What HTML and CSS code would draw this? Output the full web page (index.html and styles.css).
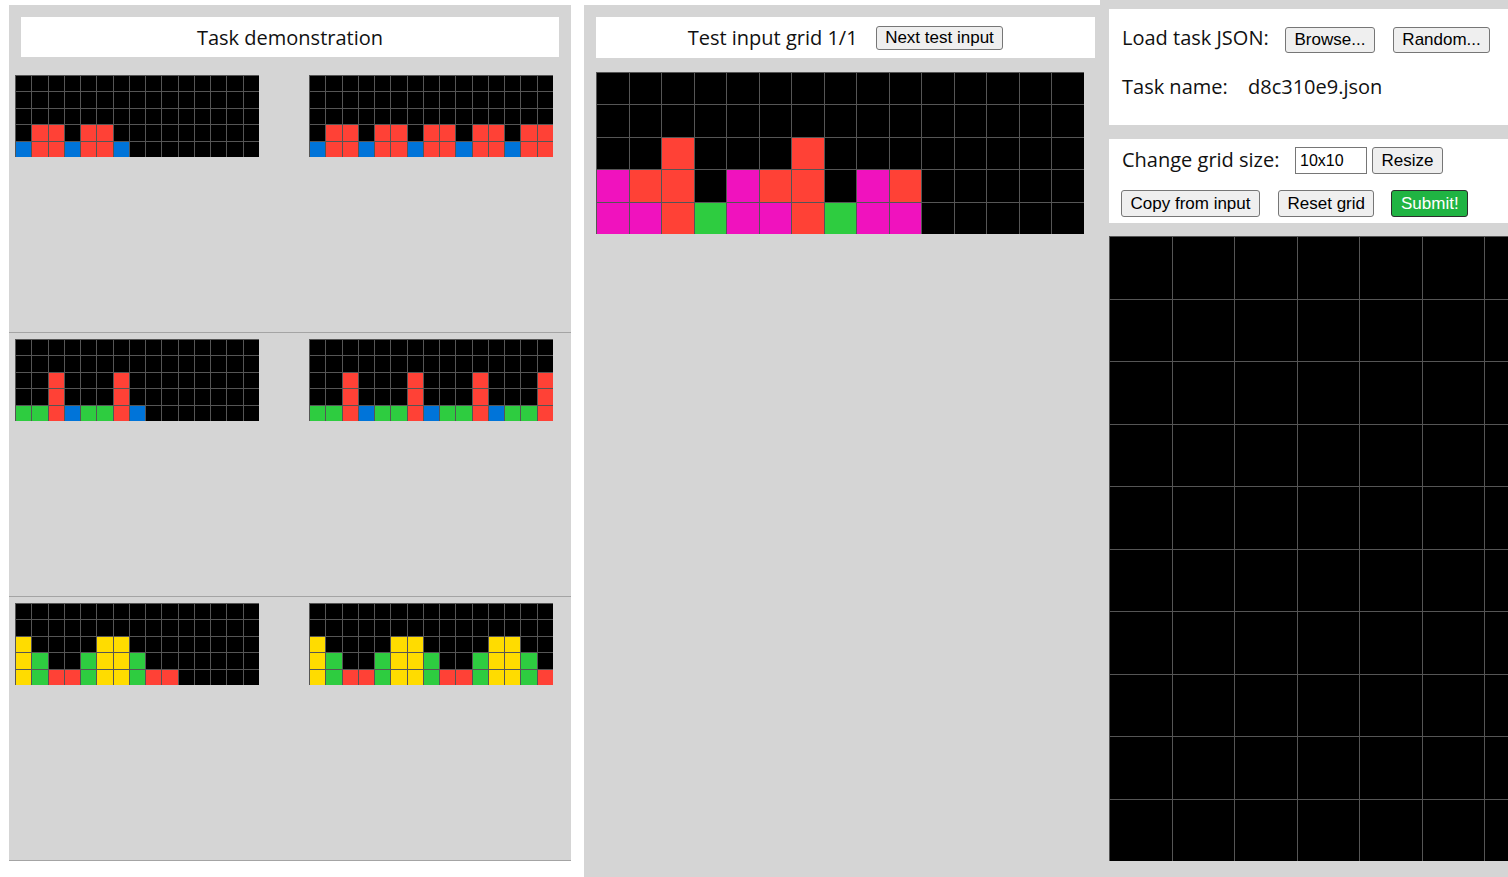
FILE: index.html
```html
<!DOCTYPE html>
<html>
<head>
<meta charset="utf-8">
<title>ARC testing interface</title>
<link rel="stylesheet" href="styles.css">
</head>
<body>
<div class="workspace">
  <div class="demo">
    <div class="demo-header">Task demonstration</div>

    <div class="pair">
      <div class="grid mini">
        <span></span><span></span><span></span><span></span><span></span><span></span><span></span><span></span><span></span><span></span><span></span><span></span><span></span><span></span><span></span>
        <span></span><span></span><span></span><span></span><span></span><span></span><span></span><span></span><span></span><span></span><span></span><span></span><span></span><span></span><span></span>
        <span></span><span></span><span></span><span></span><span></span><span></span><span></span><span></span><span></span><span></span><span></span><span></span><span></span><span></span><span></span>
        <span></span><span class="r"></span><span class="r"></span><span></span><span class="r"></span><span class="r"></span><span></span><span></span><span></span><span></span><span></span><span></span><span></span><span></span><span></span>
        <span class="b"></span><span class="r"></span><span class="r"></span><span class="b"></span><span class="r"></span><span class="r"></span><span class="b"></span><span></span><span></span><span></span><span></span><span></span><span></span><span></span><span></span>
      </div>
      <div class="grid mini">
        <span></span><span></span><span></span><span></span><span></span><span></span><span></span><span></span><span></span><span></span><span></span><span></span><span></span><span></span><span></span>
        <span></span><span></span><span></span><span></span><span></span><span></span><span></span><span></span><span></span><span></span><span></span><span></span><span></span><span></span><span></span>
        <span></span><span></span><span></span><span></span><span></span><span></span><span></span><span></span><span></span><span></span><span></span><span></span><span></span><span></span><span></span>
        <span></span><span class="r"></span><span class="r"></span><span></span><span class="r"></span><span class="r"></span><span></span><span class="r"></span><span class="r"></span><span></span><span class="r"></span><span class="r"></span><span></span><span class="r"></span><span class="r"></span>
        <span class="b"></span><span class="r"></span><span class="r"></span><span class="b"></span><span class="r"></span><span class="r"></span><span class="b"></span><span class="r"></span><span class="r"></span><span class="b"></span><span class="r"></span><span class="r"></span><span class="b"></span><span class="r"></span><span class="r"></span>
      </div>
    </div>

    <div class="pair">
      <div class="grid mini">
        <span></span><span></span><span></span><span></span><span></span><span></span><span></span><span></span><span></span><span></span><span></span><span></span><span></span><span></span><span></span>
        <span></span><span></span><span></span><span></span><span></span><span></span><span></span><span></span><span></span><span></span><span></span><span></span><span></span><span></span><span></span>
        <span></span><span></span><span class="r"></span><span></span><span></span><span></span><span class="r"></span><span></span><span></span><span></span><span></span><span></span><span></span><span></span><span></span>
        <span></span><span></span><span class="r"></span><span></span><span></span><span></span><span class="r"></span><span></span><span></span><span></span><span></span><span></span><span></span><span></span><span></span>
        <span class="g"></span><span class="g"></span><span class="r"></span><span class="b"></span><span class="g"></span><span class="g"></span><span class="r"></span><span class="b"></span><span></span><span></span><span></span><span></span><span></span><span></span><span></span>
      </div>
      <div class="grid mini">
        <span></span><span></span><span></span><span></span><span></span><span></span><span></span><span></span><span></span><span></span><span></span><span></span><span></span><span></span><span></span>
        <span></span><span></span><span></span><span></span><span></span><span></span><span></span><span></span><span></span><span></span><span></span><span></span><span></span><span></span><span></span>
        <span></span><span></span><span class="r"></span><span></span><span></span><span></span><span class="r"></span><span></span><span></span><span></span><span class="r"></span><span></span><span></span><span></span><span class="r"></span>
        <span></span><span></span><span class="r"></span><span></span><span></span><span></span><span class="r"></span><span></span><span></span><span></span><span class="r"></span><span></span><span></span><span></span><span class="r"></span>
        <span class="g"></span><span class="g"></span><span class="r"></span><span class="b"></span><span class="g"></span><span class="g"></span><span class="r"></span><span class="b"></span><span class="g"></span><span class="g"></span><span class="r"></span><span class="b"></span><span class="g"></span><span class="g"></span><span class="r"></span>
      </div>
    </div>

    <div class="pair">
      <div class="grid mini">
        <span></span><span></span><span></span><span></span><span></span><span></span><span></span><span></span><span></span><span></span><span></span><span></span><span></span><span></span><span></span>
        <span></span><span></span><span></span><span></span><span></span><span></span><span></span><span></span><span></span><span></span><span></span><span></span><span></span><span></span><span></span>
        <span class="y"></span><span></span><span></span><span></span><span></span><span class="y"></span><span class="y"></span><span></span><span></span><span></span><span></span><span></span><span></span><span></span><span></span>
        <span class="y"></span><span class="g"></span><span></span><span></span><span class="g"></span><span class="y"></span><span class="y"></span><span class="g"></span><span></span><span></span><span></span><span></span><span></span><span></span><span></span>
        <span class="y"></span><span class="g"></span><span class="r"></span><span class="r"></span><span class="g"></span><span class="y"></span><span class="y"></span><span class="g"></span><span class="r"></span><span class="r"></span><span></span><span></span><span></span><span></span><span></span>
      </div>
      <div class="grid mini">
        <span></span><span></span><span></span><span></span><span></span><span></span><span></span><span></span><span></span><span></span><span></span><span></span><span></span><span></span><span></span>
        <span></span><span></span><span></span><span></span><span></span><span></span><span></span><span></span><span></span><span></span><span></span><span></span><span></span><span></span><span></span>
        <span class="y"></span><span></span><span></span><span></span><span></span><span class="y"></span><span class="y"></span><span></span><span></span><span></span><span></span><span class="y"></span><span class="y"></span><span></span><span></span>
        <span class="y"></span><span class="g"></span><span></span><span></span><span class="g"></span><span class="y"></span><span class="y"></span><span class="g"></span><span></span><span></span><span class="g"></span><span class="y"></span><span class="y"></span><span class="g"></span><span></span>
        <span class="y"></span><span class="g"></span><span class="r"></span><span class="r"></span><span class="g"></span><span class="y"></span><span class="y"></span><span class="g"></span><span class="r"></span><span class="r"></span><span class="g"></span><span class="y"></span><span class="y"></span><span class="g"></span><span class="r"></span>
      </div>
    </div>
  </div>

  <div class="eval">
    <div class="eval-header">
      <span class="title">Test input grid 1/1</span>
      <button class="btn btn-next">Next test input</button>
    </div>
    <div class="grid test-grid">
      <span></span><span></span><span></span><span></span><span></span><span></span><span></span><span></span><span></span><span></span><span></span><span></span><span></span><span></span><span></span>
      <span></span><span></span><span></span><span></span><span></span><span></span><span></span><span></span><span></span><span></span><span></span><span></span><span></span><span></span><span></span>
      <span></span><span></span><span class="r"></span><span></span><span></span><span></span><span class="r"></span><span></span><span></span><span></span><span></span><span></span><span></span><span></span><span></span>
      <span class="m"></span><span class="r"></span><span class="r"></span><span></span><span class="m"></span><span class="r"></span><span class="r"></span><span></span><span class="m"></span><span class="r"></span><span></span><span></span><span></span><span></span><span></span>
      <span class="m"></span><span class="m"></span><span class="r"></span><span class="g"></span><span class="m"></span><span class="m"></span><span class="r"></span><span class="g"></span><span class="m"></span><span class="m"></span><span></span><span></span><span></span><span></span><span></span>
    </div>
  </div>

  <div class="editor">
    <div class="box load-box">
      <div class="row row-load">
        <span class="lbl lbl-load">Load task JSON:</span>
        <button class="btn btn-tall btn-browse">Browse...</button>
        <button class="btn btn-tall">Random...</button>
      </div>
      <div class="row row-name">
        <span class="lbl lbl-name">Task name:</span>
        <span class="lbl">d8c310e9.json</span>
      </div>
    </div>
    <div class="box size-box">
      <div class="row row-size">
        <span class="lbl lbl-size">Change grid size:</span>
        <input class="size-input" type="text" value="10x10">
        <button class="btn btn-tall">Resize</button>
      </div>
      <div class="row row-actions">
        <button class="btn btn-tall btn-copy">Copy from input</button>
        <button class="btn btn-tall btn-reset">Reset grid</button>
        <button class="btn btn-tall btn-submit">Submit!</button>
      </div>
    </div>
    <div class="grid out-grid">
      <span></span><span></span><span></span><span></span><span></span><span></span><span></span><span></span><span></span><span></span>
      <span></span><span></span><span></span><span></span><span></span><span></span><span></span><span></span><span></span><span></span>
      <span></span><span></span><span></span><span></span><span></span><span></span><span></span><span></span><span></span><span></span>
      <span></span><span></span><span></span><span></span><span></span><span></span><span></span><span></span><span></span><span></span>
      <span></span><span></span><span></span><span></span><span></span><span></span><span></span><span></span><span></span><span></span>
      <span></span><span></span><span></span><span></span><span></span><span></span><span></span><span></span><span></span><span></span>
      <span></span><span></span><span></span><span></span><span></span><span></span><span></span><span></span><span></span><span></span>
      <span></span><span></span><span></span><span></span><span></span><span></span><span></span><span></span><span></span><span></span>
      <span></span><span></span><span></span><span></span><span></span><span></span><span></span><span></span><span></span><span></span>
      <span></span><span></span><span></span><span></span><span></span><span></span><span></span><span></span><span></span><span></span>
    </div>
  </div>
</div>
</body>
</html>
```

FILE: styles.css
```css
html, body {
  margin: 0;
  padding: 0;
  background: #ffffff;
  overflow: hidden;
}

body {
  width: 1508px;
  height: 877px;
  font-family: "Open Sans", "Liberation Sans", sans-serif;
  color: #111111;
}

.workspace {
  display: flex;
  align-items: flex-start;
}

/* ---------- demonstration panel ---------- */
.demo {
  flex-shrink: 0;
  width: 562px;
  margin: 5px 0 0 9px;
  background: #d5d5d5;
}

.demo-header {
  height: 40px;
  margin: 12px 12px 12px;
  background: #ffffff;
  font-size: 20px;
  display: flex;
  align-items: center;
  justify-content: center;
}

.pair {
  box-sizing: border-box;
  height: 264px;
  padding: 6px 0 0 6px;
  border-bottom: 1px solid #a4a4a4;
  display: flex;
  align-items: flex-start;
  gap: 50px;
}

/* ---------- grids ---------- */
.grid {
  display: grid;
  background: #000000;
}

.grid > span {
  display: block;
  box-sizing: border-box;
  background: #000000;
  border-left: 1px solid #555555;
  border-top: 1px solid #555555;
}

.grid > span.r { background: #ff4136; }
.grid > span.b { background: #0074d9; }
.grid > span.g { background: #2ecc40; }
.grid > span.y { background: #ffdc00; }
.grid > span.m { background: #f012be; }

.mini {
  width: 244px;
  height: 82px;
  grid-template-columns: repeat(15, 1fr);
  grid-template-rows: repeat(5, 1fr);
}

.test-grid {
  width: 488px;
  height: 162px;
  margin-top: 14px;
  grid-template-columns: repeat(15, 1fr);
  grid-template-rows: repeat(5, 1fr);
}

.out-grid {
  width: 625px;
  height: 625px;
  margin-top: 13px;
  grid-template-columns: repeat(10, 1fr);
  grid-template-rows: repeat(10, 1fr);
}

/* ---------- evaluation panel ---------- */
.eval {
  flex-shrink: 0;
  box-sizing: border-box;
  width: 516px;
  height: 872px;
  margin: 5px 0 0 13px;
  padding: 12px 0 0 12px;
  background: #d5d5d5;
}

.eval-header {
  width: 499px;
  height: 41px;
  background: #ffffff;
  display: flex;
  align-items: center;
  justify-content: center;
  gap: 18px;
  font-size: 20px;
}

/* ---------- buttons ---------- */
.btn {
  box-sizing: border-box;
  font-family: "Liberation Sans", Arial, sans-serif;
  font-size: 17px;
  line-height: 20px;
  color: #000000;
  background: #efefef;
  border: 1px solid #767676;
  border-radius: 3px;
  padding: 1px 8.5px;
  margin: 0;
  height: 24px;
}

.btn-tall {
  height: 26px;
  padding: 2px 8.5px;
}

.row-size .btn-tall,
.row-actions .btn-tall {
  height: 27px;
}

.btn-submit {
  background: #20b443;
  color: #ffffff;
  border-color: #2d2d2d;
}

/* ---------- editor column ---------- */
.editor {
  flex-shrink: 0;
  box-sizing: border-box;
  width: 700px;
  height: 877px;
  padding: 9px 0 0 9px;
  background: #d5d5d5;
}

.box {
  box-sizing: border-box;
  width: 625px;
  background: #ffffff;
  padding-left: 13px;
}

.load-box {
  height: 116px;
  padding-top: 18px;
}

.size-box {
  height: 84px;
  margin-top: 14px;
  padding-top: 8px;
}

.row {
  display: flex;
  align-items: center;
}

.lbl {
  font-size: 20px;
  line-height: 28px;
  white-space: nowrap;
}

.row-load {
  height: 26px;
}

.lbl-load {
  width: 163px;
  margin-top: -5px;
}

.btn-browse {
  margin-right: 18px;
}

.row-name {
  margin-top: 20px;
  height: 28px;
}

.lbl-name {
  width: 126px;
}

.row-size {
  height: 27px;
}

.lbl-size {
  width: 173px;
  margin-top: -2px;
}

.size-input {
  box-sizing: border-box;
  width: 72px;
  height: 27px;
  margin: 0 5px 0 0;
  padding: 0 4px;
  border: 1px solid #767676;
  font-family: "Liberation Sans", Arial, sans-serif;
  font-size: 16px;
  color: #000000;
  background: #ffffff;
}

.row-actions {
  margin-top: 16px;
  margin-left: -1px;
}

.btn-copy {
  margin-right: 18px;
}

.btn-reset {
  margin-right: 17px;
}
```
